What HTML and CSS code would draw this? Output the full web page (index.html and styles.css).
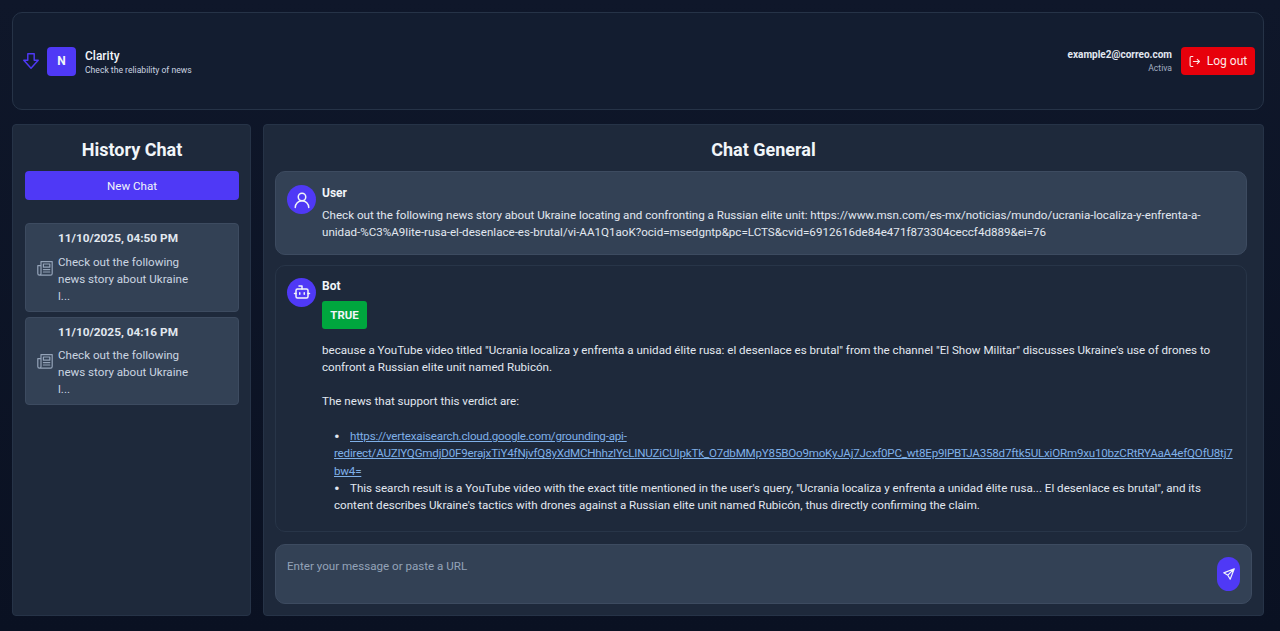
FILE: index.html
```html
<!DOCTYPE html>
<html lang="en">
<head>
<meta charset="utf-8">
<title>Clarity</title>
<link rel="stylesheet" href="styles.css">
</head>
<body>
<div class="app">
  <header class="topbar">
    <div class="brand">
      <svg class="arrow" viewBox="2 2 20 20" fill="none" stroke="currentColor" stroke-width="1.8" stroke-linejoin="round"><path d="M8 3h8v8h5l-9 10-9-10h5z"/></svg>
      <div class="logo">N</div>
      <div class="brand-text">
        <div class="brand-name">Clarity</div>
        <div class="brand-sub">Check the reliability of news</div>
      </div>
    </div>
    <div class="account">
      <div class="account-text">
        <div class="email">example2@correo.com</div>
        <div class="status">Activa</div>
      </div>
      <button class="logout">
        <svg class="logout-icon" viewBox="2 2 20 20" fill="none" stroke="currentColor" stroke-width="2" stroke-linecap="round" stroke-linejoin="round"><path d="M9 3H6a2 2 0 0 0-2 2v14a2 2 0 0 0 2 2h3M10 12h11M17 8l4 4-4 4"/></svg>
        Log out
      </button>
    </div>
  </header>
  <div class="columns">
    <aside class="panel sidebar">
      <h2 class="panel-title">History Chat</h2>
      <button class="new-chat">New Chat</button>
      <div class="history">
        <div class="history-item">
          <div class="history-date">11/10/2025, 04:50 PM</div>
          <div class="history-row">
            <svg class="news-icon" viewBox="2 2 20 20" fill="none" stroke="currentColor" stroke-width="1.5" stroke-linecap="round" stroke-linejoin="round"><path d="M7 4h14v15a2 2 0 0 1-2 2H5a2 2 0 0 1-2-2V9h4zM7 9v10a2 2 0 0 1-2 2"/><path d="M10 7h8v4h-8zM10 14h8M10 17h8"/></svg>
            <div class="history-text">Check out the following news story about Ukraine l...</div>
          </div>
        </div>
        <div class="history-item">
          <div class="history-date">11/10/2025, 04:16 PM</div>
          <div class="history-row">
            <svg class="news-icon" viewBox="2 2 20 20" fill="none" stroke="currentColor" stroke-width="1.5" stroke-linecap="round" stroke-linejoin="round"><path d="M7 4h14v15a2 2 0 0 1-2 2H5a2 2 0 0 1-2-2V9h4zM7 9v10a2 2 0 0 1-2 2"/><path d="M10 7h8v4h-8zM10 14h8M10 17h8"/></svg>
            <div class="history-text">Check out the following news story about Ukraine l...</div>
          </div>
        </div>
      </div>
    </aside>
    <main class="panel chat">
      <h2 class="panel-title">Chat General</h2>
      <div class="messages">
        <div class="msg msg-user">
          <div class="avatar"><svg viewBox="0 0 24 24" fill="none" stroke="currentColor" stroke-width="2" stroke-linecap="round"><circle cx="12" cy="8" r="5"/><path d="M3 22a9 9 0 0 1 18 0"/></svg></div>
          <div class="msg-body">
            <div class="msg-author">User</div>
            <p class="msg-text">Check out the following news story about Ukraine locating and confronting a Russian elite unit: https://www.msn.com/es-mx/noticias/mundo/ucrania-localiza-y-enfrenta-a-unidad-%C3%A9lite-rusa-el-desenlace-es-brutal/vi-AA1Q1aoK?ocid=msedgntp&amp;pc=LCTS&amp;cvid=6912616de84e471f873304ceccf4d889&amp;ei=76</p>
          </div>
        </div>
        <div class="msg msg-bot">
          <div class="avatar"><svg viewBox="0 0 24 24" fill="none" stroke="currentColor" stroke-width="2" stroke-linecap="round" stroke-linejoin="round"><path d="M12 8V4H8"/><rect x="4" y="8" width="16" height="12" rx="2"/><path d="M2 14h2M20 14h2M15 13v2M9 13v2"/></svg></div>
          <div class="msg-body">
            <div class="msg-author">Bot</div>
            <span class="verdict">TRUE</span>
            <p class="msg-text reason">because a YouTube video titled "Ucrania localiza y enfrenta a unidad élite rusa: el desenlace es brutal" from the channel "El Show Militar" discusses Ukraine's use of drones to confront a Russian elite unit named Rubicón.</p>
            <p class="msg-text support">The news that support this verdict are:</p>
            <ul class="sources">
              <li><a href="#">https://vertexaisearch.cloud.google.com/grounding-api-redirect/AUZIYQGmdjD0F9erajxTiY4fNjvfQ8yXdMCHhhzlYcLINUZiCUIpkTk_O7dbMMpY85BOo9moKyJAj7Jcxf0PC_wt8Ep9lPBTJA358d7ftk5ULxiORm9xu10bzCRtRYAaA4efQOfU8tj7bw4=</a></li>
              <li>This search result is a YouTube video with the exact title mentioned in the user's query, "Ucrania localiza y enfrenta a unidad élite rusa... El desenlace es brutal", and its content describes Ukraine's tactics with drones against a Russian elite unit named Rubicón, thus directly confirming the claim.</li>
            </ul>
          </div>
        </div>
      </div>
      <div class="composer">
        <span class="placeholder">Enter your message or paste a URL</span>
        <button class="send"><svg viewBox="0 0 24 24" fill="none" stroke="currentColor" stroke-width="2" stroke-linecap="round" stroke-linejoin="round"><path d="M21 3 3 10l7 4 4 7zM21 3 10 14"/></svg></button>
      </div>
    </main>
  </div>
</div>
</body>
</html>
```
FILE: styles.css
```css
* { box-sizing: border-box; }
html, body { margin: 0; height: 100%; }
body {
  background: #0d1425;
  color: #e2e8f0;
  font-family: Roboto, "Noto Sans", sans-serif;
  font-size: 11.6px;
  overflow: hidden;
}
.app {
  height: 631px;
  padding: 12px 16px 15px 12px;
  display: flex;
  flex-direction: column;
  gap: 14px;
  background: linear-gradient(#0f172a, #0a1122);
}
.topbar {
  height: 98px;
  flex: none;
  background: #131d30;
  border: 1px solid #263347;
  border-radius: 10px;
  padding: 0 8px 0 10px;
  display: flex;
  align-items: center;
  justify-content: space-between;
}
.brand { display: flex; align-items: center; gap: 8px; }
.arrow { width: 16px; height: 16px; color: #4f39f6; }
.logo {
  width: 29px; height: 29px;
  border-radius: 4px;
  background: #4f39f6;
  color: #f1f5f9;
  font-weight: 700;
  font-size: 12px;
  display: flex; align-items: center; justify-content: center;
}
.brand-text { margin-left: 1px; padding-top: 2px; }
.brand-name { font-size: 12px; font-weight: 500; line-height: 16px; color: #f1f5f9; }
.brand-sub { font-size: 8.6px; line-height: 12px; color: #cbd5e1; }
.account { display: flex; align-items: center; gap: 9px; }
.account-text { text-align: right; }
.email { font-size: 10px; font-weight: 700; line-height: 14px; color: #e2e8f0; }
.status { font-size: 8.6px; line-height: 12px; color: #a3afc2; }
.logout {
  width: 74px; height: 28px;
  border: 0;
  border-radius: 4px;
  background: #e7000b;
  color: #fde8e8;
  font: inherit;
  font-size: 12px;
  display: flex; align-items: center; justify-content: center; gap: 7px;
}
.logout-icon { width: 11px; height: 11px; }
.columns { flex: 1; min-height: 0; display: flex; gap: 12px; }
.panel {
  background: #1e293b;
  border: 1px solid #263347;
  border-radius: 4px;
  padding: 11px;
  display: flex;
  flex-direction: column;
}
.sidebar { width: 239px; flex: none; padding-left: 12px; }
.chat { flex: 1; min-width: 0; }
.panel-title {
  margin: 0;
  text-align: center;
  font-size: 18px;
  font-weight: 700;
  line-height: 28px;
  color: #f1f5f9;
}
.new-chat {
  margin-top: 7px;
  height: 29px;
  border: 0;
  border-radius: 4px;
  background: #4f39f6;
  color: #f1f5f9;
  font: inherit;
  font-size: 11.6px;
}
.history { margin-top: 23px; display: flex; flex-direction: column; gap: 5px; }
.history-item {
  background: #334155;
  border: 1px solid #3d4b60;
  border-radius: 4px;
  padding: 6px 11px 4px;
  height: 89px;
}
.history-item + .history-item { height: 88px; }
.history-item + .history-item .history-row { margin-top: 6px; }
.history-date { padding-left: 21px; font-weight: 700; font-size: 11.8px; line-height: 17px; color: #e2e8f0; }
.history-row { display: flex; align-items: flex-start; gap: 5px; margin-top: 7px; }
.news-icon { width: 16px; height: 16px; flex: none; margin-top: 6px; color: #94a3b8; }
.history-text { width: 135px; line-height: 17px; color: #cbd5e1; }
.messages { margin-top: 7px; padding-right: 5px; flex: 1; min-height: 0; display: flex; flex-direction: column; gap: 10px; }
.msg {
  border-radius: 10px;
  padding: 11px;
  display: flex;
  gap: 6px;
  border: 1px solid #3d4b60;
}
.msg-user { background: #334155; padding: 13px 11px 12px; }
.msg-bot { background: #1e293b; border-color: #283548; flex: 1; padding-top: 12px; }
.avatar {
  width: 29px; height: 29px;
  flex: none;
  border-radius: 50%;
  background: #4f39f6;
  color: #f1f5f9;
  display: flex; align-items: center; justify-content: center;
}
.avatar svg { width: 18px; height: 18px; }
.msg-body { flex: 1; min-width: 0; }
.msg-author { font-weight: 700; font-size: 12px; line-height: 17px; color: #f1f5f9; }
.msg-text { margin: 0; line-height: 17.33px; color: #e2e8f0; }
.msg-user .msg-text { margin-top: 5px; }
.verdict {
  display: block;
  margin-top: 6px;
  width: 45px; height: 28px;
  border-radius: 3px;
  background: #00a63e;
  color: #f1f5f9;
  font-weight: 700;
  font-size: 11.4px;
  line-height: 28px;
  text-align: center;
}
.reason { margin-top: 13px; }
.support { margin-top: 17px; }
.sources { margin: 17.5px 0 0; padding: 0 0 0 12px; list-style: none; line-height: 17.33px; color: #e2e8f0; overflow-wrap: anywhere; }
.sources li::before { content: "•"; display: inline-block; width: 16px; font-size: 17px; line-height: 0; vertical-align: -2px; }
.sources a { color: #7fb0e8; letter-spacing: -0.2px; }
.composer {
  margin-top: 12px;
  height: 60px;
  flex: none;
  background: #334155;
  border: 1px solid #3d4b60;
  border-radius: 10px;
  padding: 12px 11px;
  display: flex;
  justify-content: space-between;
}
.placeholder { color: #94a3b8; line-height: 17px; padding-top: 1px; }
.send {
  width: 23px; height: 34px;
  border: 0; padding: 0;
  border-radius: 12px;
  background: #4f39f6;
  color: #f1f5f9;
  display: flex; align-items: center; justify-content: center;
}
.send svg { width: 14px; height: 14px; }
```
